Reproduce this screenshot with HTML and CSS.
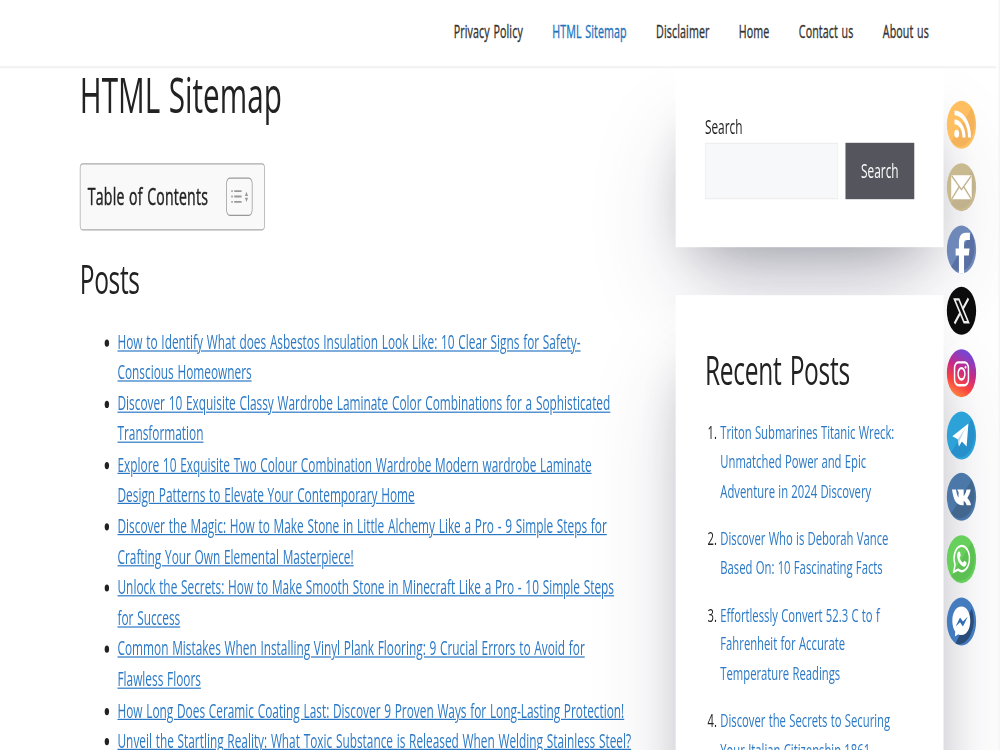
FILE: index.html
```html
<!doctype html>
<html lang="en">
<head>
    <meta charset="UTF-8">
    <meta name="viewport" content="width=device-width, initial-scale=1.0">
    <title>HTML Sitemap</title>

    <link rel="stylesheet" href="styles.css">
</head>
<body>

<div class="page">
    <header class="site-header">
        <nav class="main-nav">
            <a href="#">Privacy Policy</a>
            <a href="#" class="current">HTML Sitemap</a>
            <a href="#">Disclaimer</a>
            <a href="#">Home</a>
            <a href="#">Contact us</a>
            <a href="#">About us</a>
        </nav>
    </header>

    <div class="site-content">
        <main class="content">
            <h1>HTML Sitemap</h1>

            <div class="toc">
                <span class="toc-title">Table of Contents</span>
                <a href="#" class="toc-toggle">
                    <svg width="30" height="20" viewBox="0 0 30 20">
                        <path fill="#999" d="M4 4.500h2V6H4zM8 4.500h10V6H8zM4 9h2v1.500H4zM8 9h10v1.500H8zM4 13.500h2V15H4zM8 13.500h10V15H8zM22.500 9.400l2.200-3.600 2.200 3.600zM22.500 10.800l2.200 3.600 2.200-3.600z"/>
                    </svg>
                </a>
            </div>

            <h2>Posts</h2>

            <ul class="posts">
                <li><a href="#">How to Identify What does Asbestos Insulation Look Like: 10 Clear Signs for Safety-<br>Conscious Homeowners</a></li>
                <li><a href="#">Discover 10 Exquisite Classy Wardrobe Laminate Color Combinations for a Sophisticated<br>Transformation</a></li>
                <li><a href="#">Explore 10 Exquisite Two Colour Combination Wardrobe Modern wardrobe Laminate<br>Design Patterns to Elevate Your Contemporary Home</a></li>
                <li><a href="#">Discover the Magic: How to Make Stone in Little Alchemy Like a Pro - 9 Simple Steps for<br>Crafting Your Own Elemental Masterpiece!</a></li>
                <li><a href="#">Unlock the Secrets: How to Make Smooth Stone in Minecraft Like a Pro - 10 Simple Steps<br>for Success</a></li>
                <li><a href="#">Common Mistakes When Installing Vinyl Plank Flooring: 9 Crucial Errors to Avoid for<br>Flawless Floors</a></li>
                <li><a href="#">How Long Does Ceramic Coating Last: Discover 9 Proven Ways for Long-Lasting Protection!</a></li>
                <li><a href="#">Unveil the Startling Reality: What Toxic Substance is Released When Welding Stainless Steel?</a></li>
            </ul>
        </main>

        <aside class="sidebar">
            <div class="widget">
                <label class="search-label" for="search">Search</label>
                <div class="search-row">
                    <input type="search" id="search">
                    <button>Search</button>
                </div>
            </div>

            <div class="widget">
                <h2>Recent Posts</h2>
                <ol class="recent">
                    <li><a href="#">Triton Submarines Titanic Wreck:<br>Unmatched Power and Epic<br>Adventure in 2024 Discovery</a></li>
                    <li><a href="#">Discover Who is Deborah Vance<br>Based On: 10 Fascinating Facts</a></li>
                    <li><a href="#">Effortlessly Convert 52.3 C to f<br>Fahrenheit for Accurate<br>Temperature Readings</a></li>
                    <li><a href="#">Discover the Secrets to Securing<br>Your Italian Citizenship 1861</a></li>
                </ol>
            </div>
        </aside>
    </div>

    <div class="social">
        <!-- rss -->
        <svg viewBox="0 0 40 40">
            <circle cx="20" cy="20" r="20" fill="#ffbf60"/>
            <path d="M34 6A20 20 0 0 1 6 34z" fill="#f4b25a"/>
            <circle cx="13.500" cy="27.500" r="3.300" fill="#fff"/>
            <path d="M10.500 17.500A13 13 0 0 1 23.500 30.500M10.500 10A20.500 20.500 0 0 1 31 30.500" fill="none" stroke="#fff" stroke-width="4"/>
        </svg>
        <!-- mail -->
        <svg viewBox="0 0 40 40">
            <circle cx="20" cy="20" r="20" fill="#c9b98f"/>
            <path d="M34 6A20 20 0 0 1 6 34z" fill="#c1b18d"/>
            <rect x="6" y="10" width="28" height="20" rx="1" fill="#fff"/>
            <path d="M6.500 10.500L20 22l13.500-11.500M6.500 30l11-11M33.500 30l-11-11" fill="none" stroke="#c2b38e" stroke-width="1.500"/>
        </svg>
        <!-- facebook -->
        <svg viewBox="0 0 40 40">
            <circle cx="20" cy="20" r="20" fill="#6f88ba"/>
            <path d="M34 6A20 20 0 0 1 6 34z" fill="#5b70a2"/>
            <path d="M16.500 40V25h-4.500v-6h4.500v-4c0-6 3-9 9-9h6v6h-4c-3 0-4 1-4 3v4h7.500l-1 6h-6.500v15z" fill="#fff"/>
        </svg>
        <!-- x -->
        <svg viewBox="0 0 40 40">
            <circle cx="20" cy="20" r="20" fill="#0c0c0c"/>
            <path d="M10.500 10.500h6l13 19h-6z" fill="none" stroke="#eee" stroke-width="2"/>
            <path d="M29.500 9.800l-8 9M18 22l-7.500 8.500" stroke="#eee" stroke-width="2.500"/>
        </svg>
        <!-- instagram -->
        <svg viewBox="0 0 40 40">
            <defs>
                <linearGradient id="insta" x1=".2" y1="1" x2=".6" y2="0">
                    <stop offset="0" stop-color="#ff9442"/>
                    <stop offset=".3" stop-color="#f9443f"/>
                    <stop offset=".6" stop-color="#c62a87"/>
                    <stop offset="1" stop-color="#6d48dc"/>
                </linearGradient>
            </defs>
            <circle cx="20" cy="20" r="20" fill="url(#insta)"/>
            <rect x="10.500" y="11" width="19" height="19" rx="5" fill="none" stroke="#fff" stroke-width="2"/>
            <circle cx="20" cy="20.500" r="4.700" fill="none" stroke="#fff" stroke-width="2"/>
            <circle cx="25.500" cy="15" r="1.200" fill="#fff"/>
        </svg>
        <!-- telegram -->
        <svg viewBox="0 0 40 40">
            <circle cx="20" cy="20" r="20" fill="#2ca2d9"/>
            <path d="M34 6A20 20 0 0 1 6 34z" fill="#278fc9"/>
            <path d="M7.500 20.500L29.500 10l-2.500 19-6.500-4-4 4-1.500-6z" fill="#fff"/>
            <path d="M15 23l11-10-8.500 11-1 5z" fill="#b9d9ec"/>
        </svg>
        <!-- vk -->
        <svg viewBox="0 0 40 40">
            <circle cx="20" cy="20" r="20" fill="#4c78a9"/>
            <path d="M34 6A20 20 0 0 1 6 34z" fill="#41678f"/>
            <path d="M7 14h5.500c1 4 2 5.500 3.500 6.500v-4.500l-2-2h9v5.500c1.500-1 3-3 4-5.500h5.500c-.5 2.500-2.500 5-4.500 7 2.500 1.500 4.500 3.500 5 6h-6c-1-2-2-3-4-3.500v3.500h-3C13 27 9 22.500 7 14z" fill="#fff"/>
        </svg>
        <!-- whatsapp -->
        <svg viewBox="0 0 40 40">
            <circle cx="20" cy="20" r="20" fill="#67cf5c"/>
            <path d="M34 6A20 20 0 0 1 6 34z" fill="#5cc052"/>
            <path d="M9.500 30.500l1.700-6A10.500 10.500 0 1 1 15.500 28.700z" fill="none" stroke="#fff" stroke-width="2"/>
            <path d="M16 13.500l2 .3 1 3.200-1.500 1.800c1 2 2.300 3.200 4.500 4.200l1.800-1.800 3.200 1.600c0 2.500-2 3.700-4 3.400-4.700-.8-8.500-4.700-9-9 0-1.700.7-3 2-3.700z" fill="#fff"/>
        </svg>
        <!-- messenger -->
        <svg viewBox="0 0 40 40">
            <circle cx="20" cy="20" r="20" fill="#447bbf"/>
            <path d="M34 9A20 20 0 0 1 12 38.300z" fill="#2a4c78"/>
            <path d="M20 7.500C12.500 7.500 7.500 12.500 7.500 19.500c0 4 1.800 7 4 9l-.5 4 4.500-2c1.500.5 3 .7 4.500.7 7.500 0 12-5.500 12-11.700C32 12.500 27 7.500 20 7.500z" fill="#fff"/>
            <path d="M12 24l6-7.500 4 3.500 6.500-4-6.500 8-4-3.500z" fill="#2f6db5"/>
        </svg>
    </div>
</div>

</body>
</html>
```
FILE: styles.css
```css
html {
    overflow: hidden;
}

body {
    margin: 0;
    height: 100vh;
    overflow: hidden;
    background-color: #FFF;
    color: #222;
    font: 16.2px/25.6px "Open Sans", "Noto Sans", sans-serif;
    word-spacing: .9px;
}

.page {
    position: relative;
    box-sizing: border-box;
    width: 1366px;
    height: 625px;
    overflow: hidden;
    border-right: 2px solid #f5f5f5;
    transform: scale(.732, 1.2);
    transform-origin: 0 0;
}

a {
    color: #2b79c5;
}

h1, h2 {
    margin: 0;
    font-weight: 400;
    white-space: nowrap;
}

h1 {
    padding-top: 1px;
    font-size: 40.5px;
    line-height: 50px;
    letter-spacing: .05px;
}

h2 {
    padding-top: 1px;
    font-size: 33.5px;
    line-height: 42px;
    letter-spacing: -.5px;
    word-spacing: 3px;
    margin-bottom: 20px;
}

.site-header {
    position: relative;
    z-index: 1;
    width: 1361px;
    height: 55px;
    background-color: #FFF;
    border-bottom: 2px solid #f3f3f3;
}

.main-nav {
    display: flex;
    justify-content: flex-end;
    gap: 40px;
    padding-right: 92px;
    line-height: 52px;
    font-size: 14.6px;
    letter-spacing: .17px;
    -webkit-text-stroke: .3px;
}

.main-nav a {
    color: #333;
    text-decoration: none;
}

.main-nav .current {
    color: #1e73be;
}

.site-content {
    display: flex;
    justify-content: space-between;
    margin-top: -4px;
    padding: 0 75px 0 109px;
}

.toc {
    display: flex;
    align-items: center;
    justify-content: space-between;
    box-sizing: border-box;
    width: 253px;
    height: 56px;
    margin: 32px 0 17.500px;
    padding: 0 16px 0 10px;
    background: #f9f9f9;
    border: 1px solid #aaa;
    border-radius: 4px;
}

.toc-title {
    font-size: 19.2px;
    letter-spacing: .3px;
    -webkit-text-stroke: .4px;
}

.toc-toggle {
    display: flex;
    align-items: center;
    justify-content: center;
    width: 34px;
    height: 30px;
    border: 1px solid #999;
    border-radius: 5px;
}

.posts {
    margin: 0;
    padding-left: 51.500px;
    white-space: nowrap;
}

.posts li::marker {
    color: #222;
}

.sidebar {
    width: 366px;
}

.widget {
    box-sizing: border-box;
    margin-bottom: 40px;
    padding: 40px;
    background-color: #FFF;
    box-shadow: rgba(50, 50, 93, .25) 0 50px 100px -20px, rgba(0, 0, 0, .3) 0 30px 60px -30px;
}

.search-label {
    display: block;
    height: 25.500px;
    line-height: 26px;
}

.search-row {
    display: flex;
    gap: 10px;
}

.search-row input {
    box-sizing: border-box;
    width: 182px;
    height: 47px;
    background-color: #f7f8f9;
    border: 1px solid #eee;
}

.search-row button {
    width: 94px;
    padding: 2px 0 0;
    font: inherit;
    color: #FFF;
    background-color: #55555e;
    border: 0;
}

.widget h2 {
    letter-spacing: -.4px;
}

.recent {
    margin: 0;
    padding: .5px 0 0 21px;
    font-size: 15.4px;
    line-height: 24.3px;
    word-spacing: .5px;
    white-space: nowrap;
}

.recent li {
    margin-bottom: 15.300px;
}

.recent a {
    text-decoration: none;
}

/* floats over the page at the right edge */
.social {
    position: absolute;
    z-index: 2;
    top: 84.300px;
    left: 1292.500px;
    display: grid;
    gap: 11.660px;
}

.social svg {
    display: block;
    width: 41px;
    height: 40px;
    overflow: visible;
}
```
